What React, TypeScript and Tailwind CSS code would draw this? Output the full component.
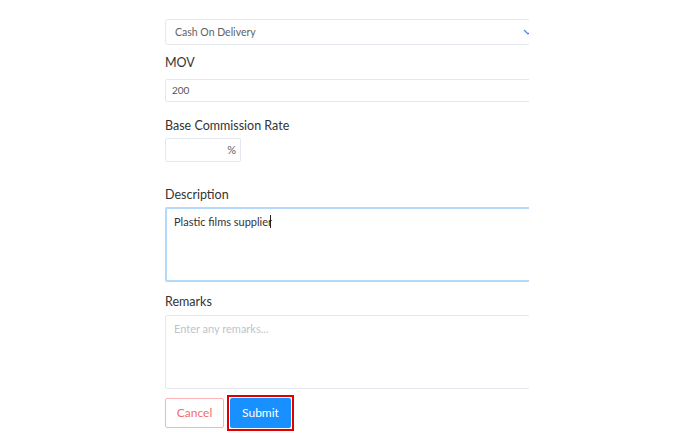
import { useState } from 'react';

export default function App() {
  const [description, setDescription] = useState('Plastic films supplier');

  return (
    <div className="flex min-h-screen justify-center bg-white pl-[4px] font-['Lato',sans-serif]">
      <div className="w-[364px] overflow-hidden pt-[19px]">
        {/* Payment method */}
        <div className="flex h-[26px] w-[380px] items-center rounded-[3px] border border-[#e4e7ed] pl-[9px] pr-[11px] text-[10.5px] text-[#606266]">
          <span className="flex-1 translate-y-px">Cash On Delivery</span>
          <svg width="10" height="6" viewBox="0 0 10 6" fill="none">
            <path d="M1 1l4 4 4-4" stroke="#4a7fe8" strokeWidth="1.2" />
          </svg>
        </div>

        {/* MOV */}
        <label className="mt-[9px] block text-[12.5px] leading-[18px] text-[#333]">MOV</label>
        <div className="mt-[7px] flex h-[23px] w-[380px] items-center rounded-[2px] border border-[#e4e7ed] px-[6px] text-[10px] text-[#555]">
          200
        </div>

        {/* Base Commission */}
        <label className="mt-[15px] block text-[12.5px] leading-[18px] text-[#333]">
          Base Commission Rate
        </label>
        <div className="mt-[3px] flex h-[24px] w-[76px] items-center justify-end rounded-[2px] border border-[#e4e7ed] pr-[4px] text-[11px] text-[#606266]">
          %
        </div>

        {/* Description */}
        <label className="mt-[24px] block text-[12.5px] leading-[18px] text-[#333]">Description</label>
        <div className="mt-[3px] h-[75px] w-[380px] rounded-[2px] border-2 border-[#b3dafc] px-[7px] pt-[4px] text-[11px] text-[#333]">
          <span>{description}</span>
          <span className="inline-block h-[13px] w-px -translate-x-[2px] translate-y-[2px] bg-[#222]" />
          <input
            className="hidden"
            value={description}
            onChange={(e) => setDescription(e.target.value)}
          />
        </div>

        {/* Remarks */}
        <label className="mt-[11px] block text-[12.5px] leading-[18px] text-[#333]">Remarks</label>
        <div className="mt-[4px] h-[74px] w-[380px] rounded-[2px] border border-[#e4e7ed] px-[8px] pt-[5px] text-[11px] text-[#c0c4cc]">
          Enter any remarks...
        </div>

        {/* Actions */}
        <div className="mt-[6px] flex items-center gap-[3px]">
          <button className="h-[30px] w-[59px] rounded-[2px] border border-[#fbb4b4] bg-white text-[12px] text-[#f56c6c]">
            Cancel
          </button>
          <span className="border-2 border-[#e00000] p-px">
            <button className="block h-[30px] w-[61px] rounded-[2px] bg-[#1890ff] text-[12px] text-white">
              Submit
            </button>
          </span>
        </div>
      </div>
    </div>
  );
}
